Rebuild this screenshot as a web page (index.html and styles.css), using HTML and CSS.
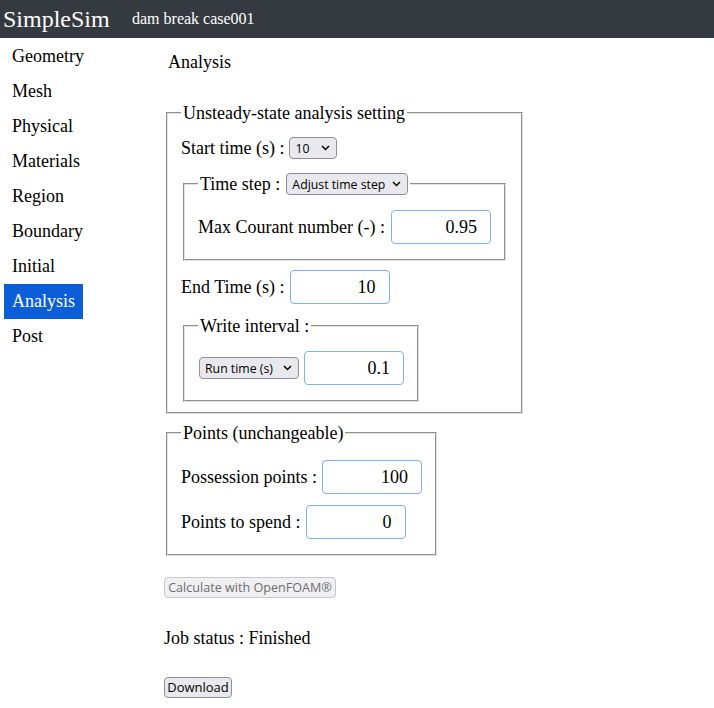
FILE: index.html
```html
<!DOCTYPE html>
<html lang="en">
<head>
<meta charset="utf-8">
<title>SimpleSim</title>
<link rel="stylesheet" href="styles.css">
</head>
<body>
<header class="topbar">
  <span class="brand">SimpleSim</span>
  <span class="case-name">dam break case001</span>
</header>
<div class="layout">
  <nav class="sidebar">
    <a class="nav-item">Geometry</a>
    <a class="nav-item">Mesh</a>
    <a class="nav-item">Physical</a>
    <a class="nav-item">Materials</a>
    <a class="nav-item">Region</a>
    <a class="nav-item">Boundary</a>
    <a class="nav-item">Initial</a>
    <a class="nav-item active">Analysis</a>
    <a class="nav-item">Post</a>
  </nav>
  <main class="main">
    <h2 class="title">Analysis</h2>

    <fieldset class="group group-unsteady">
      <legend class="legend">Unsteady-state analysis setting</legend>
      <div class="row row-start">
        <span>Start time (s) :</span>
        <select class="sel sel-start"><option>10</option></select>
      </div>
      <fieldset class="group sub sub-step">
        <legend class="legend legend-row">
          <span>Time step :</span>
          <select class="sel sel-step"><option>Adjust time step</option></select>
        </legend>
        <div class="row row-courant">
          <span>Max Courant number (-) :</span>
          <input class="num" type="text" value="0.95">
        </div>
      </fieldset>
      <div class="row row-end">
        <span>End Time (s) :</span>
        <input class="num" type="text" value="10">
      </div>
      <fieldset class="group sub sub-write">
        <legend class="legend">Write interval :</legend>
        <div class="row row-write">
          <select class="sel sel-write"><option>Run time (s)</option></select>
          <input class="num" type="text" value="0.1">
        </div>
      </fieldset>
    </fieldset>

    <fieldset class="group group-points">
      <legend class="legend">Points (unchangeable)</legend>
      <div class="row row-possess">
        <span>Possession points :</span>
        <input class="num" type="text" value="100">
      </div>
      <div class="row row-spend">
        <span>Points to spend :</span>
        <input class="num" type="text" value="0">
      </div>
    </fieldset>

    <button class="btn btn-calc" disabled>Calculate with OpenFOAM®</button>
    <p class="status">Job status : Finished</p>
    <button class="btn btn-download">Download</button>
  </main>
</div>
</body>
</html>
```

FILE: styles.css
```css
* { box-sizing: border-box; }

html, body {
  margin: 0;
  padding: 0;
  background: #ffffff;
}

body {
  font-family: "Liberation Serif", "Times New Roman", serif;
  font-size: 18px;
  line-height: 21px;
  color: #000000;
}

.topbar {
  height: 38px;
  background: #343a40;
  color: #ffffff;
  display: flex;
  align-items: center;
  padding-left: 3px;
}

.brand {
  font-size: 24px;
  line-height: 28px;
  width: 129px;
}

.case-name {
  font-size: 16px;
  line-height: 20px;
}

.layout {
  display: flex;
  align-items: flex-start;
}

.sidebar {
  width: 164px;
  flex: none;
  display: flex;
  flex-direction: column;
  align-items: flex-start;
  padding: 1px 0 0 4px;
}

.nav-item {
  display: block;
  padding: 7px 8px;
  line-height: 21px;
  color: #000000;
  text-decoration: none;
}

.nav-item.active {
  background: #0b5ed7;
  color: #ffffff;
}

.main {
  flex: 1;
  padding-top: 13.5px;
}

.title {
  margin: 0;
  padding-left: 4px;
  font-size: 18px;
  font-weight: normal;
  line-height: 21px;
}

.group {
  width: fit-content;
  margin: 0 2px;
  padding: 0 13px;
  border: 2px groove #e2e2e2;
}

.legend {
  padding: 0 2px;
  line-height: 21px;
}

.legend-row {
  display: flex;
  align-items: center;
  gap: 6px;
  height: 22px;
}

.row {
  display: flex;
  align-items: center;
  gap: 5px;
}

.group-unsteady {
  margin-top: 30px;
  padding-bottom: 10px;
}

.row-start {
  margin-top: 13.5px;
  height: 22px;
}

.sub-step {
  margin-top: 14px;
  padding-bottom: 15px;
}

.row-courant {
  margin-top: 15px;
  gap: 6px;
}

.row-end {
  margin-top: 9px;
}

.sub-write {
  margin-top: 11.5px;
  padding-bottom: 15px;
}

.row-write {
  margin-top: 14.5px;
  padding-left: 1px;
}

.group-points {
  margin-top: 8.5px;
  padding-bottom: 15px;
}

.row-possess {
  margin-top: 16.5px;
}

.row-spend {
  margin-top: 11px;
}

.num {
  width: 100px;
  height: 34px;
  margin: 0;
  padding: 0 13px 0 4px;
  border: 1px solid #80aef5;
  border-radius: 4px;
  background: #ffffff;
  font-family: "Liberation Serif", "Times New Roman", serif;
  font-size: 18px;
  color: #000000;
  text-align: right;
  outline: none;
}

.sel {
  appearance: none;
  -webkit-appearance: none;
  height: 22px;
  margin: 0;
  padding: 0 0 0 5px;
  border: 1px solid #8f8f9d;
  border-radius: 4px;
  background-color: #e9e9ed;
  background-image: url("data:image/svg+xml;utf8,<svg xmlns='http://www.w3.org/2000/svg' width='9' height='6' viewBox='0 0 9 6'><path d='M1 1 L4.5 4.5 L8 1' fill='none' stroke='black' stroke-width='1.5'/></svg>");
  background-repeat: no-repeat;
  background-position: right 6px center;
  font-family: "Open Sans", "Noto Sans", sans-serif;
  font-size: 12.3px;
  color: #000000;
}

.sel-start { width: 48px; }
.sel-step { width: 122px; }
.sel-write { width: 100px; height: 22px; }

.btn {
  display: block;
  height: 21px;
  margin: 0;
  padding: 0;
  border: 1px solid #8f8f9d;
  border-radius: 4px;
  background: #e9e9ed;
  font-family: "Open Sans", "Noto Sans", sans-serif;
  font-size: 12.6px;
  line-height: 19px;
  color: #000000;
  white-space: nowrap;
  text-align: center;
}

.btn-calc {
  width: 172px;
  margin-top: 21px;
  color: #6d6d6d;
  background: #f0f0f3;
  border-color: #c6c6cd;
}

.btn-download {
  width: 68px;
  margin-top: 28.5px;
  font-size: 13px;
}

.status {
  margin: 29.5px 0 0 0;
  line-height: 21px;
}
```
